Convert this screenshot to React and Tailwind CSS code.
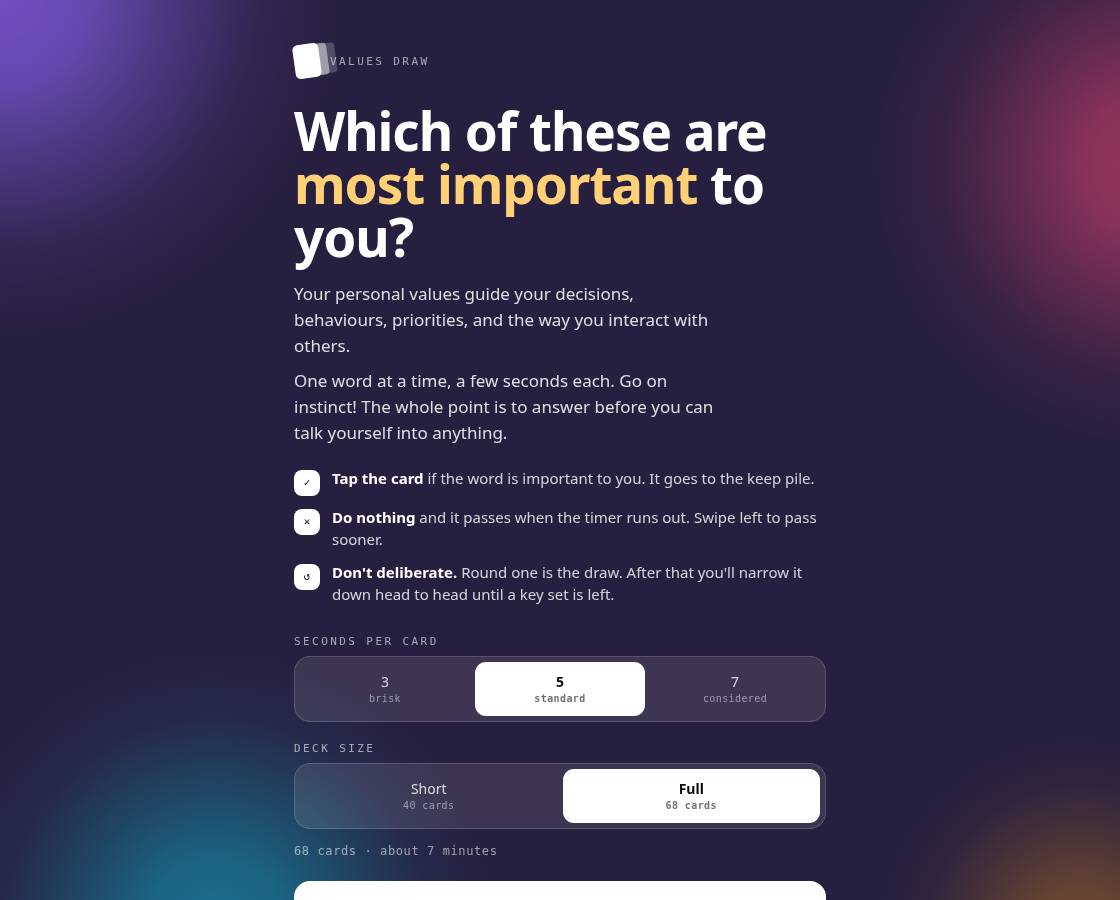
import { useState } from "react";
import clsx from "clsx";

const steps = [
  {
    icon: "✓",
    title: "Tap the card",
    text: " if the word is important to you. It goes to the keep pile.",
  },
  {
    icon: "✕",
    title: "Do nothing",
    text: " and it passes when the timer runs out. Swipe left to pass sooner.",
  },
  {
    icon: "↺",
    title: "Don't deliberate.",
    text: " Round one is the draw. After that you'll narrow it down head to head until a key set is left.",
  },
];

const speeds = [
  { value: 3, label: "3", hint: "brisk" },
  { value: 5, label: "5", hint: "standard" },
  { value: 7, label: "7", hint: "considered" },
];

const decks = [
  { value: 40, label: "Short", hint: "40 cards" },
  { value: 68, label: "Full", hint: "68 cards" },
];

// Soft colour blobs behind the page
const Backdrop = () => (
  <div className="fixed inset-0 -z-10 overflow-hidden bg-[#271f3f]" aria-hidden="true">
    <div className="absolute -left-[345px] -top-[350px] size-[690px] bg-[radial-gradient(closest-side,#7150c2,#7150c2d9_25%,#7150c27a_50%,#7150c224_75%,#7150c200)]" />
    <div className="absolute -right-[320px] -top-[120px] size-[570px] bg-[radial-gradient(closest-side,#9c3660,#9c3660d0_25%,#9c366078_50%,#9c366024_75%,#9c366000)]" />
    <div className="absolute -bottom-[310px] -left-[65px] size-[560px] bg-[radial-gradient(closest-side,#19708e,#19708ed9_25%,#19708e7a_50%,#19708e24_75%,#19708e00)]" />
    <div className="absolute -bottom-[245px] -right-[165px] size-[410px] bg-[radial-gradient(closest-side,#704a30,#704a30d9_25%,#704a307a_50%,#704a3024_75%,#704a3000)]" />
  </div>
);

const Segmented = ({ id, label, options, value, onChange, className }) => (
  <section className={className}>
    <h2
      id={id}
      className="mb-1.5 font-['DejaVu_Sans_Mono',monospace] text-[11px] leading-4 tracking-[0.22em] text-white/60 uppercase"
    >
      {label}
    </h2>
    <div
      role="group"
      aria-labelledby={id}
      className="flex gap-[5px] rounded-2xl border border-white/15 bg-white/10 p-[5px]"
    >
      {options.map((o) => {
        const active = o.value === value;
        return (
          <button
            key={o.value}
            type="button"
            aria-pressed={active}
            onClick={() => onChange(o.value)}
            className={clsx(
              "flex-1 rounded-[11px] py-2.5 text-center",
              active ? "bg-white font-bold text-[#0d0b14]" : "text-white/80"
            )}
          >
            <span className="block text-sm leading-5">{o.label}</span>
            <span className="block font-['DejaVu_Sans_Mono',monospace] text-[10px] leading-[14px] tracking-[0.04em] opacity-60">
              {o.hint}
            </span>
          </button>
        );
      })}
    </div>
  </section>
);

const App = () => {
  const [seconds, setSeconds] = useState(5);
  const [deck, setDeck] = useState(68);
  const minutes = Math.ceil((deck * (seconds + 1)) / 60);

  return (
    <div className="relative isolate min-h-screen font-['Noto_Sans',sans-serif] text-white">
      <Backdrop />
      <main className="mx-auto max-w-[580px] px-6 pt-11 pb-12">
        {/* Brand */}
        <header className="flex items-center gap-2.5">
          <span
            aria-hidden="true"
            className="h-[34px] w-[26px] -rotate-8 rounded-[5px] bg-white shadow-[9px_0_0_-1px_rgba(255,255,255,0.45),18px_0_0_-2px_rgba(255,255,255,0.2)]"
          />
          <span className="relative pt-0.5 font-['DejaVu_Sans_Mono',monospace] text-[11px] leading-4 tracking-[0.22em] text-white/60 uppercase">
            Values draw
          </span>
        </header>

        <h1 className="mt-[26px] text-[53px] leading-[53px] font-bold tracking-[-0.02em]">
          Which of these are <em className="text-[#ffd076] not-italic">most important</em> to you?
        </h1>

        <div className="mt-[18px] max-w-[430px] space-y-[9px] text-[17px] leading-[26px] text-white/85">
          <p>
            Your personal values guide your decisions, behaviours, priorities, and the way you
            interact with others.
          </p>
          <p>
            One word at a time, a few seconds each. Go on instinct! The whole point is to answer
            before you can talk yourself into anything.
          </p>
        </div>

        {/* How it works */}
        <ul className="mt-[21px] space-y-[11px]">
          {steps.map((s) => (
            <li key={s.title} className="flex items-start gap-3 text-[15px] leading-[22px] text-white/80">
              <span className="mt-[3px] -mb-px grid size-[26px] shrink-0 place-items-center rounded-lg bg-white font-['DejaVu_Sans_Mono',monospace] text-[11px] text-[#0d0b14]">
                {s.icon}
              </span>
              <p>
                <strong className="font-bold text-white">{s.title}</strong>
                {s.text}
              </p>
            </li>
          ))}
        </ul>

        <Segmented
          id="speed"
          label="Seconds per card"
          options={speeds}
          value={seconds}
          onChange={setSeconds}
          className="mt-[29px]"
        />
        <Segmented
          id="deck"
          label="Deck size"
          options={decks}
          value={deck}
          onChange={setDeck}
          className="mt-[19px]"
        />

        <p className="mt-[13px] font-['DejaVu_Sans_Mono',monospace] text-xs leading-[18px] tracking-[0.05em] text-white/55">
          {deck} cards · about {minutes} minutes
        </p>

        <button
          type="button"
          className="mt-[21px] w-full rounded-2xl bg-white py-6 text-base font-bold text-[#0d0b14]"
        >
          Start
        </button>
      </main>
    </div>
  );
};

export default App;
